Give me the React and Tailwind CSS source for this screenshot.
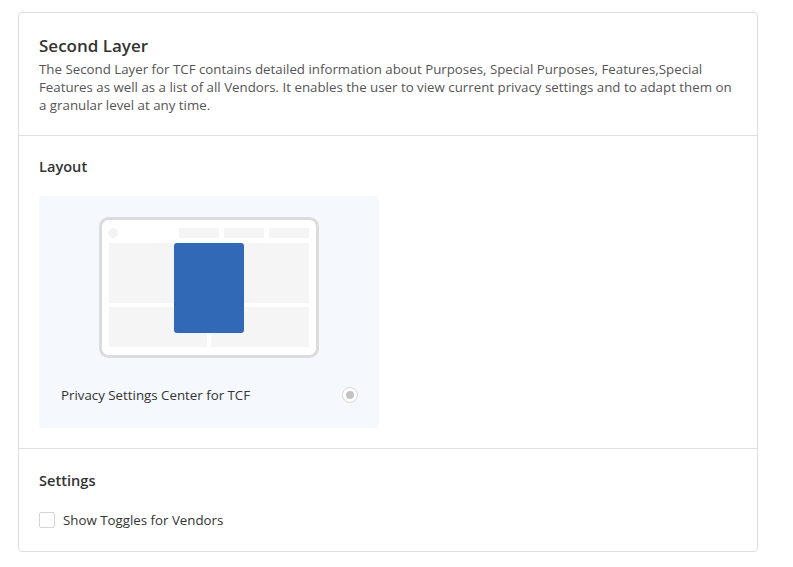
import React from "react";

function LayoutPreview() {
  return (
    <svg width="220" height="141" viewBox="0 0 220 141" className="block">
      <rect x="1.5" y="1.5" width="217" height="138" rx="8" fill="#fff" stroke="#dcdcdc" strokeWidth="3" />
      <circle cx="14" cy="16" r="5" fill="#f3f3f3" />
      <rect x="80" y="11" width="40" height="10" fill="#f5f5f5" />
      <rect x="125" y="11" width="40" height="10" fill="#f5f5f5" />
      <rect x="170" y="11" width="40" height="10" fill="#f5f5f5" />
      <rect x="10" y="26" width="200" height="60" fill="#f5f5f5" />
      <rect x="10" y="90" width="98" height="40" fill="#f5f5f5" />
      <rect x="112" y="90" width="98" height="40" fill="#f5f5f5" />
      <rect x="75" y="26" width="70" height="90" rx="3" fill="#3169b7" />
    </svg>
  );
}

export default function App() {
  return (
    <div
      className="w-[793px] h-[567px] bg-white pt-3 pl-[18px]"
      style={{ fontFamily: '"Open Sans", "Noto Sans", sans-serif' }}
    >
      <div className="w-[740px] border border-[#dedede] rounded-[4px] text-[#333]">
        <div className="px-5 pt-[21px] pb-[21px] border-b border-[#e0e0e0]">
          <h2 className="text-[17px] leading-[24px] font-semibold text-[#333]">Second Layer</h2>
          <p className="mt-[2px] text-[13.3px] leading-[18px] text-[#555]">
            The Second Layer for TCF contains detailed information about Purposes, Special Purposes, Features,Special
            Features as well as a list of all Vendors. It enables the user to view current privacy settings and to adapt them on
            a granular level at any time.
          </p>
        </div>

        <div className="px-5 pt-[19px] pb-[20px] border-b border-[#e0e0e0]">
          <h3 className="text-[14.6px] leading-[22px] font-semibold text-[#333]">Layout</h3>
          <div className="mt-[19px] w-[340px] h-[232px] bg-[#f5f8fc] rounded-[4px] flex flex-col">
            <div className="flex justify-center pt-[21px]">
              <LayoutPreview />
            </div>
            <div className="flex items-center justify-between pl-[22px] pr-[21px] mt-[28px]">
              <span className="text-[13.3px] leading-[18px] text-[#333]">Privacy Settings Center for TCF</span>
              <span className="w-4 h-4 rounded-full border border-[#d9d9d9] bg-white flex items-center justify-center">
                <span className="w-2 h-2 rounded-full bg-[#c4c4c4]" />
              </span>
            </div>
          </div>
        </div>

        <div className="px-5 pt-[20px] pb-[22px]">
          <h3 className="text-[14.6px] leading-[22px] font-semibold text-[#333]">Settings</h3>
          <label className="mt-[20px] flex items-center gap-2">
            <span className="w-4 h-4 border border-[#d4d4d4] rounded-[2px] bg-white" />
            <span className="text-[13.3px] leading-[18px] text-[#333]">Show Toggles for Vendors</span>
          </label>
        </div>
      </div>
    </div>
  );
}
